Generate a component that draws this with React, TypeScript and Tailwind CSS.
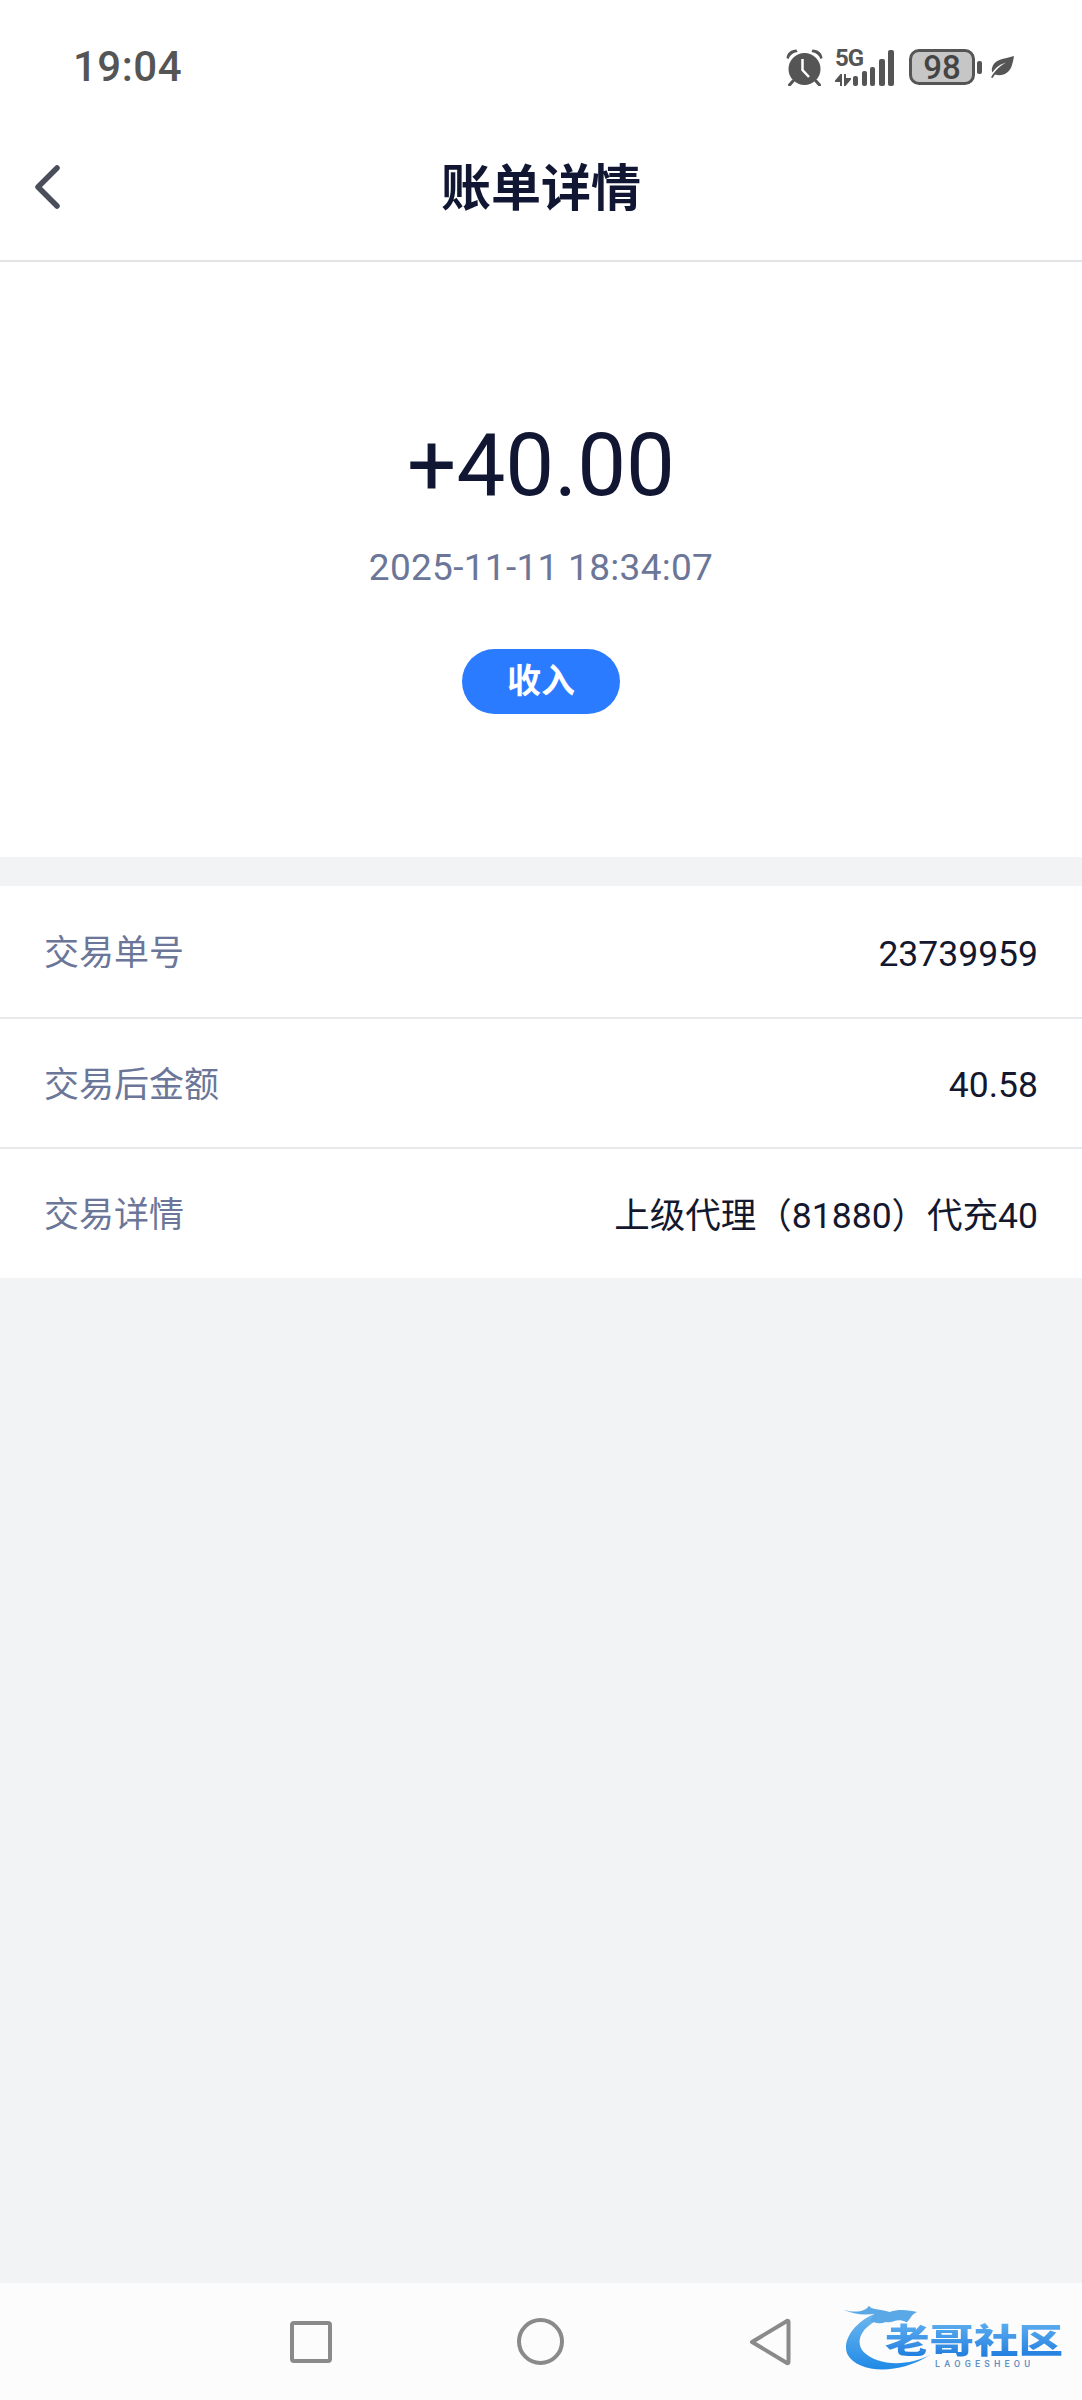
const rows = [
  { label: "交易单号", value: "23739959" },
  { label: "交易后金额", value: "40.58" },
  { label: "交易详情", value: "上级代理（81880）代充40" },
];

const bars = [
  "h-[10px] w-[5px]",
  "h-[15px] w-[5px]",
  "h-[19px] w-[5px]",
  "h-[27px] w-[6px]",
  "h-[36px] w-[6px]",
];

function AlarmIcon() {
  return (
    <svg width="37" height="37" viewBox="0 0 37 37" className="shrink-0">
      <circle cx="18.5" cy="20" r="16" fill="#555555" />
      <path d="M0.500 9 C1 4 5 0.500 10.500 0.500 L11.500 3 C7 3.500 4 6 2.500 10 Z" fill="#555555" />
      <path d="M36.500 9 C36 4 32 0.500 26.500 0.500 L25.500 3 C30 3.500 33 6 34.500 10 Z" fill="#555555" />
      <path d="M7 32 L3.500 36 M30 32 L33.500 36" stroke="#555555" strokeWidth="3" strokeLinecap="round" />
      <path d="M16.500 10 L16.500 21 L23 28" fill="none" stroke="#ffffff" strokeWidth="2.500" />
    </svg>
  );
}

function NetworkIcon() {
  return (
    <div className="flex items-end">
      <div className="flex w-[18px] flex-col">
        <span className="text-[24px] leading-[20px] font-bold tracking-[-1px] whitespace-nowrap text-[#555555]">5G</span>
        <svg width="16" height="12" viewBox="0 0 16 12" className="mt-[6px]">
          <path d="M6 12 L6 3 M1 7 L6 1 L6 7 Z M10 0 L10 9 M15 5 L10 11 L10 5 Z" fill="#555555" stroke="#555555" strokeWidth="2" />
        </svg>
      </div>
      <div className="flex items-end gap-[3.500px]">
        {bars.map((bar) => (
          <div key={bar} className={`${bar} rounded-[2px] bg-[#555555]`} />
        ))}
      </div>
    </div>
  );
}

function Battery() {
  return (
    <div className="flex items-center gap-[2px]">
      <div className="flex h-[36px] w-[66px] items-center justify-center rounded-[10px] border-[3.500px] border-[#555555] bg-[#c6c6c6] text-[33px] leading-none font-medium text-[#444444]">
        98
      </div>
      <div className="h-[13px] w-[5px] rounded-[2px] bg-[#555555]" />
    </div>
  );
}

function LeafIcon() {
  return (
    <svg width="24" height="22" viewBox="0 0 24 22" className="shrink-0">
      <path d="M24 0 C14 3 4 3 2 12 C1.500 14 2 15.500 2.500 16.500 C6 11 11 8 16 6.500 C11 9.500 5 14 1 21.500 L2.500 22 L5 18.500 C12 21 20 17 22 9 C23 6 23.500 3 24 0 Z" fill="#555555" />
    </svg>
  );
}

function Logo() {
  return (
    <div className="absolute top-[20px] left-[843px] h-[72px] w-[225px]">
      <svg width="92" height="72" viewBox="190 68 276 216" className="absolute top-0 left-0 blur-[0.4px]">
        <defs>
          <linearGradient id="swirl" x1="0" y1="0" x2="0" y2="1">
            <stop offset="0" stopColor="#6fb7ee" />
            <stop offset="1" stopColor="#1f8ae6" />
          </linearGradient>
        </defs>
        <path d="M285 100 C215 130 185 190 205 225 C232 272 345 292 455 222 C380 262 292 255 252 215 C226 186 240 140 305 115 Z" fill="url(#swirl)" />
        <path d="M192 88 C230 100 258 92 268 76 C276 90 300 84 330 95 C360 84 390 90 412 95 C392 104 392 120 380 126 C352 110 340 130 320 125 C300 130 292 132 270 120 L285 100 C250 106 220 100 192 88 Z" fill="#5aa8e6" />
      </svg>
      <div className="absolute top-[18px] left-[42px] origin-left scale-x-[1.31] bg-gradient-to-b from-[#5fb0f0] to-[#1678dc] bg-clip-text text-[34px] leading-[40px] font-black whitespace-nowrap text-transparent">
        老哥社区
      </div>
      <div className="absolute top-[56px] left-[92px] text-[9px] leading-[10px] font-medium tracking-[4.200px] text-[#5f8fc4]">
        LAOGESHEOU
      </div>
    </div>
  );
}

export default function App() {
  return (
    <div className="flex min-h-[2400px] w-[1082px] flex-col bg-[#f2f3f5] font-['Roboto','Noto_Sans_CJK_SC',sans-serif]">
      {/* Status bar */}
      <div className="flex h-[112px] items-start justify-between bg-white pt-[48px] pr-[68px] pl-[73px]">
        <span className="mt-[1px] text-[42px] leading-[36px] font-medium tracking-[0.500px] text-[#555555]">19:04</span>
        <div className="flex items-center gap-[12px]">
          <AlarmIcon />
          <NetworkIcon />
          <div className="ml-[3px] flex items-center gap-[8px]">
            <Battery />
            <LeafIcon />
          </div>
        </div>
      </div>

      {/* Nav header */}
      <div className="relative flex h-[150px] items-center justify-center border-b-2 border-[#e3e4e6] bg-white pt-[6px]">
        <svg width="28" height="46" viewBox="0 0 28 46" className="absolute top-[52px] left-[33px]">
          <path d="M24 4 L5 23 L24 42" fill="none" stroke="#4a4d5a" strokeWidth="5.500" strokeLinecap="round" strokeLinejoin="round" />
        </svg>
        <h1 className="text-[50px] leading-[60px] font-bold text-[#111633]">账单详情</h1>
      </div>

      {/* Amount */}
      <div className="flex h-[595px] flex-col items-center bg-white pt-[153px]">
        <p className="text-[87px] leading-[100px] text-[#111633]">+40.00</p>
        <p className="mt-[31px] text-[37px] leading-[44px] tracking-[0.300px] text-[#6b7698]">2025-11-11 18:34:07</p>
        <div className="mt-[59px] flex h-[65px] w-[158px] items-center justify-center rounded-full bg-[#2a7bff] text-[34px] font-bold text-white">
          收入
        </div>
      </div>

      {/* Details */}
      <div className="mt-[29px] bg-white">
        {rows.map((row, i) => (
          <div
            key={row.label}
            className={`flex h-[130.500px] items-center justify-between pt-[6px] pr-[44px] pl-[44px] text-[35px] ${i > 0 ? "border-t-2 border-[#e8e9eb]" : ""}`}
          >
            <span className="text-[#6b7698]">{row.label}</span>
            <span className="text-[35.500px] text-[#14182e]">{row.value}</span>
          </div>
        ))}
      </div>

      <div className="flex-1" />

      {/* System nav */}
      <div className="relative flex h-[117px] items-center gap-[185px] bg-[#fcfcfc] pl-[290px]">
        <div className="h-[42px] w-[42px] rounded-[4px] border-[4px] border-[#8a8a8a]" />
        <div className="h-[47px] w-[47px] rounded-full border-[4px] border-[#8a8a8a]" />
        <svg width="42" height="48" viewBox="0 0 42 48">
          <path d="M3 24 L38 3 Q39.500 2.500 39.500 4 L39.500 44 Q39.500 45.500 38 45 Z" fill="none" stroke="#8a8a8a" strokeWidth="4" strokeLinejoin="round" />
        </svg>
        <Logo />
      </div>
    </div>
  );
}
